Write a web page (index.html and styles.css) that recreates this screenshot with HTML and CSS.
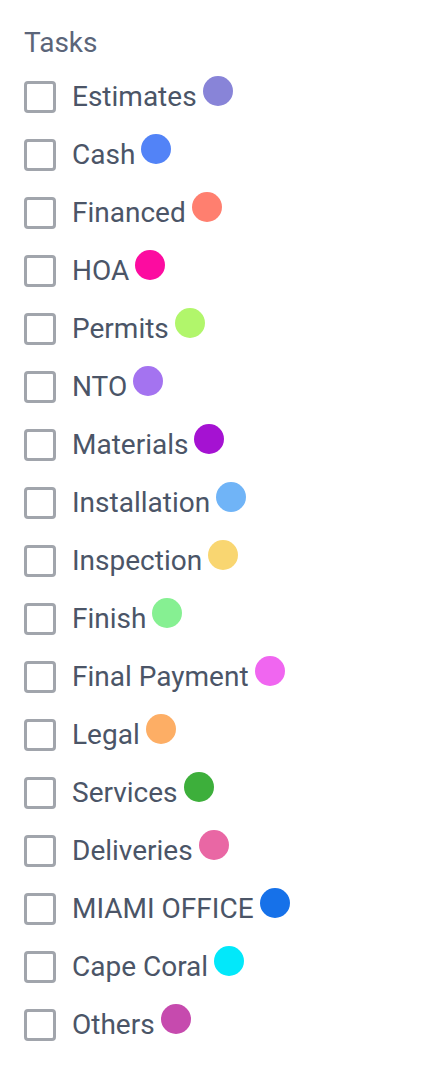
FILE: index.html
```html
<!DOCTYPE html>
<html lang="en">
<head>
<meta charset="utf-8">
<title>Tasks</title>
<link rel="stylesheet" href="styles.css">
</head>
<body>
<section class="panel">
  <h2 class="panel-title">Tasks</h2>
  <ul class="task-list">
    <li class="task"><span class="box"></span><span class="label">Estimates</span><span class="dot c1"></span></li>
    <li class="task"><span class="box"></span><span class="label">Cash</span><span class="dot c2"></span></li>
    <li class="task"><span class="box"></span><span class="label">Financed</span><span class="dot c3"></span></li>
    <li class="task"><span class="box"></span><span class="label">HOA</span><span class="dot c4"></span></li>
    <li class="task"><span class="box"></span><span class="label">Permits</span><span class="dot c5"></span></li>
    <li class="task"><span class="box"></span><span class="label">NTO</span><span class="dot c6"></span></li>
    <li class="task"><span class="box"></span><span class="label">Materials</span><span class="dot c7"></span></li>
    <li class="task"><span class="box"></span><span class="label">Installation</span><span class="dot c8"></span></li>
    <li class="task"><span class="box"></span><span class="label">Inspection</span><span class="dot c9"></span></li>
    <li class="task"><span class="box"></span><span class="label">Finish</span><span class="dot c10"></span></li>
    <li class="task"><span class="box"></span><span class="label">Final Payment</span><span class="dot c11"></span></li>
    <li class="task"><span class="box"></span><span class="label">Legal</span><span class="dot c12"></span></li>
    <li class="task"><span class="box"></span><span class="label">Services</span><span class="dot c13"></span></li>
    <li class="task"><span class="box"></span><span class="label">Deliveries</span><span class="dot c14"></span></li>
    <li class="task"><span class="box"></span><span class="label">MIAMI OFFICE</span><span class="dot c15"></span></li>
    <li class="task"><span class="box"></span><span class="label">Cape Coral</span><span class="dot c16"></span></li>
    <li class="task"><span class="box"></span><span class="label">Others</span><span class="dot c17"></span></li>
  </ul>
</section>
</body>
</html>
```

FILE: styles.css
```css
html, body {
  margin: 0;
  padding: 0;
  background: #ffffff;
}

body {
  font-family: Roboto, "Liberation Sans", Arial, sans-serif;
  color: #4b5567;
}

.panel {
  padding: 26px 24px 0 24px;
}

.panel-title {
  margin: 0 0 8px 0;
  font-size: 28px;
  font-weight: 400;
  line-height: 34px;
  color: #5b6579;
}

.task-list {
  list-style: none;
  margin: 0;
  padding: 0;
}

.task {
  display: flex;
  align-items: center;
  height: 58px;
}

.box {
  box-sizing: border-box;
  width: 32px;
  height: 32px;
  border: 3px solid #a1a5ac;
  border-radius: 4px;
  flex: none;
}

.label {
  margin-left: 16px;
  font-size: 28px;
  line-height: 34px;
  color: #4b5567;
}

.dot {
  width: 30px;
  height: 30px;
  border-radius: 50%;
  margin-left: 6px;
  margin-bottom: 12px;
  flex: none;
}

.c1 { background: #8884d8; }
.c2 { background: #5283f7; }
.c3 { background: #ff7f6f; }
.c4 { background: #fc0ca0; }
.c5 { background: #b1f66b; }
.c6 { background: #a473f0; }
.c7 { background: #a512d2; }
.c8 { background: #70b4f7; }
.c9 { background: #f9d671; }
.c10 { background: #86f092; }
.c11 { background: #f066f0; }
.c12 { background: #fdae65; }
.c13 { background: #3daf3b; }
.c14 { background: #e967a4; }
.c15 { background: #1671e9; }
.c16 { background: #02e8fa; }
.c17 { background: #c64aae; }
```
